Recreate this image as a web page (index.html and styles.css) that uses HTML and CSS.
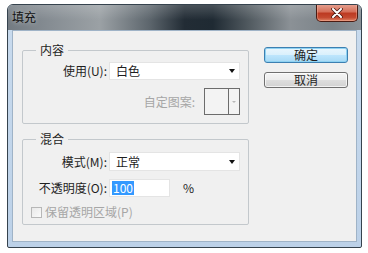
FILE: index.html
```html
<!DOCTYPE html>
<html lang="zh-CN">
<head>
<meta charset="UTF-8" />
<title>填充</title>
<link rel="stylesheet" href="styles.css">
</head>
<body>

<div class="window">
  <div class="titlebar">
    <span class="title">填充</span>
    <span class="close">
      <svg width="12" height="10" viewBox="0 0 12 10">
        <path d="M2 1 L10 9 M10 1 L2 9" stroke="#4a1a12" stroke-width="3.6" stroke-linecap="round" />
        <path d="M2 1 L10 9 M10 1 L2 9" stroke="#fff" stroke-width="2" stroke-linecap="round" />
      </svg>
    </span>
  </div>

  <div class="client">
    <div class="groups">
      <fieldset class="group group-content">
        <legend>内容</legend>
        <div class="rows">
          <label class="row-label">使用(U):</label>
          <div class="select"><span>白色</span><span class="arrow"></span></div>
          <div class="pattern-row">
            <span class="muted">自定图案:</span>
            <div class="pattern"><span class="swatch"></span><span class="pattern-btn"><span class="tiny-arrow"></span></span></div>
          </div>
        </div>
      </fieldset>

      <fieldset class="group group-blend">
        <legend>混合</legend>
        <div class="rows">
          <label class="row-label">模式(M):</label>
          <div class="select select-tall"><span>正常</span><span class="arrow"></span></div>
          <label class="row-label">不透明度(O):</label>
          <div class="opacity">
            <div class="text-input"><span class="selected">100</span></div>
            <span class="unit">%</span>
          </div>
          <div class="check-row">
            <span class="checkbox"></span>
            <span class="muted">保留透明区域(P)</span>
          </div>
        </div>
      </fieldset>
    </div>

    <div class="buttons">
      <button class="btn btn-default">确定</button>
      <button class="btn">取消</button>
    </div>
  </div>
</div>

</body>
</html>
```

FILE: styles.css
```css
/* base */
* {
  box-sizing: border-box;
}
body {
  margin: 0;
  padding: 4px 6px 5px 7px;
  background: #fff;
  font-family: "Noto Sans CJK SC", "Noto Sans", sans-serif;
  font-size: 12px;
  color: #1e1e1e;
}

/* window frame */
.window {
  width: 355px;
  height: 244px;
  display: flex;
  flex-direction: column;
  border: 1px solid #36434e;
  border-radius: 6px 6px 2px 2px;
  background: linear-gradient(180deg, #c9dbee, #bcd1e8);
  overflow: hidden;
}
.titlebar {
  height: 25px;
  flex: none;
  display: flex;
  justify-content: space-between;
  align-items: flex-start;
  padding-left: 4px;
  background:
    linear-gradient(180deg, rgba(255,255,255,0.18), rgba(255,255,255,0) 60%),
    linear-gradient(90deg, #737b82 0%, #868d93 12%, #9ba1a5 26%, #5d666d 40%, #222c35 50%, #1f2a33 58%, #50595f 68%, #8b9196 80%, #7a8288 92%, #8a9197 100%);
}
.title {
  margin-top: 4px;
  line-height: 16px;
  color: #111;
  text-shadow: 0 0 5px rgba(255,255,255,0.55);
}
.close {
  width: 42px;
  height: 18px;
  margin-right: 3px;
  margin-top: -1px;
  display: flex;
  align-items: center;
  justify-content: center;
  border: 1px solid #4b1b12;
  border-top: none;
  border-radius: 0 0 5px 5px;
  background: linear-gradient(180deg, #e7a494 0%, #d5705a 45%, #bd3a22 55%, #c44a30 80%, #e08466 100%);
  box-shadow: inset 0 0 0 1px rgba(255,200,180,0.35);
}

/* dialog body */
.client {
  flex: 1;
  margin: 0 4px 5px 4px;
  border: 1px solid #9fb3c7;
  background: #f0f0f0;
  display: flex;
  align-items: flex-start;
  padding: 12px 0 0 9px;
}
.groups {
  width: 227px;
  display: flex;
  flex-direction: column;
  gap: 8px;
}
.group {
  margin: 0;
  padding: 0 8px 8px 0;
  border: 1px solid #c3c8cc;
  border-radius: 2px;
  min-width: 0;
}
.group-blend {
  padding-bottom: 6px;
}
legend {
  margin-left: 13px;
  padding: 0 4px;
  line-height: 14px;
}
.rows {
  display: grid;
  grid-template-columns: 84px 131px;
  column-gap: 2px;
  row-gap: 8px;
  align-items: center;
  margin-top: 5px;
}
.group-blend .rows {
  margin-top: 6px;
}
.row-label {
  text-align: right;
  line-height: 14px;
  white-space: nowrap;
}
.select {
  height: 18px;
  display: flex;
  align-items: center;
  justify-content: space-between;
  padding: 0 3px 0 6px;
  background: #fff;
  border: 1px solid #e4e4e4;
  line-height: 14px;
}
.select-tall {
  height: 19px;
}
.arrow {
  width: 0;
  height: 0;
  border-left: 3px solid transparent;
  border-right: 3px solid transparent;
  border-top: 4px solid #111;
  margin-right: 1px;
}
.muted {
  color: #a6a6a6;
  line-height: 14px;
  white-space: nowrap;
}
.pattern-row {
  grid-column: 1 / -1;
  display: flex;
  justify-content: flex-end;
  align-items: center;
  gap: 9px;
}
.pattern {
  width: 36px;
  height: 27px;
  display: flex;
  border: 1px solid #6c6c6c;
  background: #f3f3f3;
}
.swatch {
  width: 24px;
  border-right: 1px solid #6c6c6c;
}
.pattern-btn {
  flex: 1;
  display: flex;
  align-items: center;
  justify-content: center;
}
.tiny-arrow {
  width: 0;
  height: 0;
  border-left: 2px solid transparent;
  border-right: 2px solid transparent;
  border-top: 2px solid #b8b8b8;
}
.opacity {
  display: flex;
  align-items: center;
}
.text-input {
  width: 61px;
  height: 18px;
  display: flex;
  align-items: center;
  padding-left: 2px;
  background: #fff;
  border: 1px solid #e4e4e4;
}
.selected {
  background: #3399ff;
  color: #fff;
  line-height: 14px;
  padding: 0 1px;
}
.unit {
  margin-left: 13px;
  line-height: 14px;
}
.check-row {
  grid-column: 1 / -1;
  display: flex;
  align-items: center;
  gap: 3px;
  padding-left: 8px;
  margin-top: 1px;
  height: 12px;
}
.checkbox {
  width: 11px;
  height: 11px;
  border: 1px solid #b7b7b7;
  background: linear-gradient(135deg, #e9e9e9, #fafafa);
}

/* buttons */
.buttons {
  display: flex;
  flex-direction: column;
  gap: 9px;
  margin-left: 15px;
  margin-top: 4px;
}
.btn {
  width: 84px;
  height: 16px;
  padding: 0;
  font-family: inherit;
  font-size: 12px;
  line-height: 14px;
  color: #1e1e1e;
  border: 1px solid #707070;
  border-radius: 3px;
  background: linear-gradient(180deg, #f4f4f4 0%, #ececec 50%, #dedede 50%, #d2d2d2 100%);
  box-shadow: inset 0 0 0 1px rgba(255,255,255,0.7);
}
.btn-default {
  border-color: #3c7fb1;
  background: linear-gradient(180deg, #eaf6fd 0%, #d9f0fc 50%, #bee6fd 50%, #a7d9f5 100%);
  box-shadow: inset 0 0 0 1px #8fd2f2;
}
```
